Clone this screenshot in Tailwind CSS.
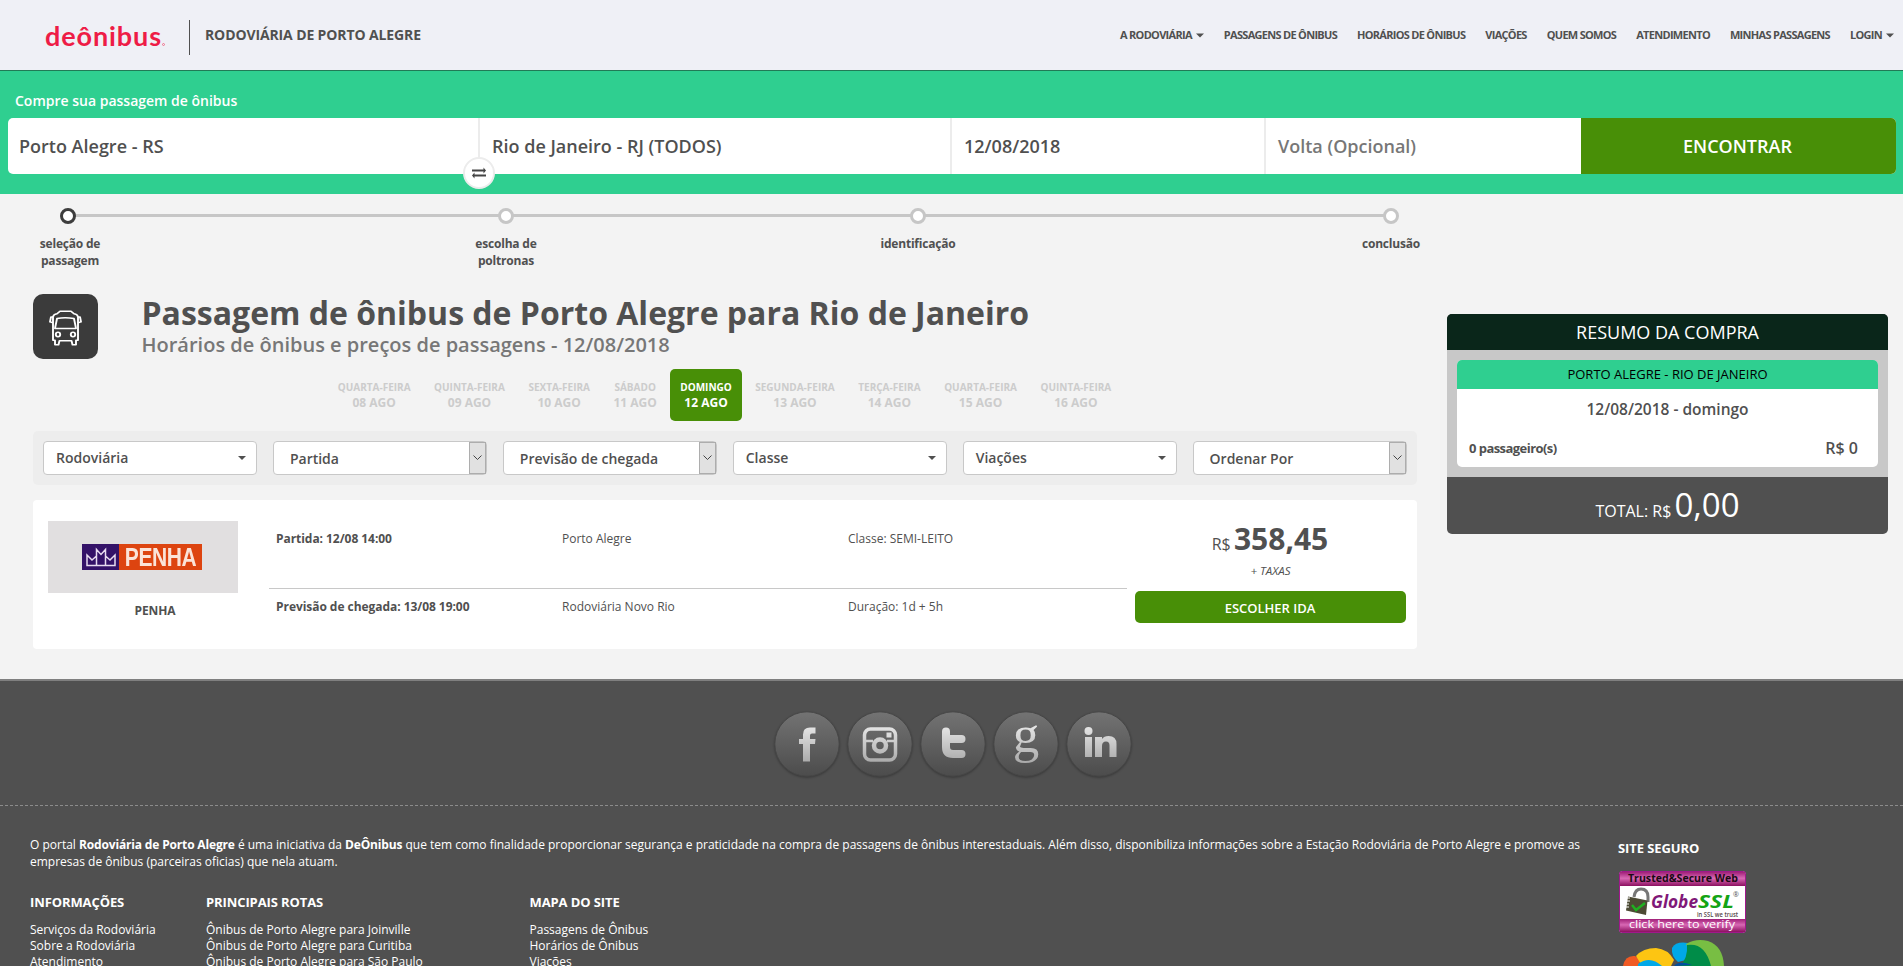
<!DOCTYPE html>
<html lang="pt-BR">
<head>
<meta charset="utf-8">
<title>Rodoviária de Porto Alegre</title>
<script src="https://cdn.jsdelivr.net/npm/@tailwindcss/browser@4"></script>
</head>
<body class="h-[966px] overflow-hidden bg-[#f3f3f3] font-['Open_Sans',sans-serif] text-[#505050]">

<header class="flex h-[71px] items-start border-b border-[#217a56] bg-[#eff0f6] pl-[45px] pr-[9px]">
  <div class="flex h-[70px] w-[144px] items-start pt-[20px] font-['Lato',sans-serif] text-[27px] leading-[32px] font-bold tracking-[0.9px] text-[#ee1c46]">deônibus<span class="mt-[23px] size-[3px] rounded-full border border-[#ee1c46]/50"></span></div>
  <div class="mt-[20px] h-[35px] w-px bg-[#505050]"></div>
  <div class="mt-[25px] ml-[15px] text-[14px] leading-[20px] font-bold tracking-[-0.12px]">RODOVIÁRIA DE PORTO ALEGRE</div>
  <nav class="mt-[25px] ml-auto flex gap-[20px] text-[11px] leading-[20px] font-bold tracking-[-0.7px] whitespace-nowrap">
    <span class="flex items-center gap-[4px]">A RODOVIÁRIA<svg width="8" height="5" viewBox="0 0 8 5"><path d="M0 .5h8L4 4.500z" fill="#505050"/></svg></span>
    <span>PASSAGENS DE ÔNIBUS</span><span>HORÁRIOS DE ÔNIBUS</span><span>VIAÇÕES</span><span>QUEM SOMOS</span><span>ATENDIMENTO</span><span>MINHAS PASSAGENS</span>
    <span class="flex items-center gap-[4px]">LOGIN<svg width="8" height="5" viewBox="0 0 8 5"><path d="M0 .5h8L4 4.500z" fill="#505050"/></svg></span>
  </nav>
</header>

<section class="h-[123px] bg-[#2fcf90] px-[8px] pt-[20px]">
  <div class="h-[27px] pl-[7px] text-[14px] leading-[20px] font-semibold text-white">Compre sua passagem de ônibus</div>
  <div class="relative flex h-[56px] w-[1888px] rounded-[5px] bg-white text-[18px] leading-[56px] font-semibold">
    <div class="w-[472px] border-r-2 border-[#ececec] pl-[11px]">Porto Alegre - RS</div>
    <div class="w-[472px] border-r-2 border-[#ececec] pl-[12px]">Rio de Janeiro - RJ (TODOS)</div>
    <div class="w-[314px] border-r-2 border-[#ececec] pl-[12px]">12/08/2018</div>
    <div class="w-[315px] pl-[12px] text-[#777]">Volta (Opcional)</div>
    <div class="flex-1 rounded-r-[5px] bg-[#488f07] pr-[2px] text-center text-white">ENCONTRAR</div>
    <div class="absolute top-[39px] left-[455px] flex size-[32px] items-center justify-center rounded-full border-2 border-[#ececec] bg-white">
      <svg width="14" height="12" viewBox="0 0 14 12" fill="#444"><path d="M0 2.500h11.500V.5L14 3.500l-2.500 3V4.500H0zM14 9.500H2.500v2L0 8.500l2.500-3v2H14z"/></svg>
    </div>
  </div>
</section>

<ol class="relative flex h-[100px] pt-[14px] pl-[18px] text-center text-[12px] leading-[17px] font-bold tracking-[-0.2px]">
  <li class="absolute top-[20px] left-[68px] h-[3px] w-[1322px] bg-[#c6c6c6]"></li>
  <li class="relative w-[100px]"><div class="mx-auto mb-[11px] size-[16px] rounded-full border-3 border-[#3d3d3d] bg-white"></div><p class="pl-[4px]">seleção de<br>passagem</p></li>
  <li class="relative ml-[338px] w-[100px]"><div class="mx-auto mb-[11px] size-[16px] rounded-full border-3 border-[#c6c6c6] bg-white"></div><p>escolha de<br>poltronas</p></li>
  <li class="relative ml-[312px] w-[100px]"><div class="mx-auto mb-[11px] size-[16px] rounded-full border-3 border-[#c6c6c6] bg-white"></div><p>identificação</p></li>
  <li class="relative ml-[373px] w-[100px]"><div class="mx-auto mb-[11px] size-[16px] rounded-full border-3 border-[#c6c6c6] bg-white"></div><p>conclusão</p></li>
</ol>

<main class="flex h-[385px] items-start pl-[33px]">
  <div class="w-[1384px]">
    <div class="flex h-[75px]">
      <div class="flex size-[65px] items-center justify-center rounded-[10px] bg-[#3b3b3b]">
        <svg class="mt-[2px]" width="33" height="36" viewBox="0 0 33 44" preserveAspectRatio="none" fill="none" stroke="#fff" stroke-width="1.900" stroke-linejoin="round"><path d="M4 8.500Q4.500 5 8 4.500L11 1.500H22L25 4.500Q28.500 5 29 8.500"/><path d="M4 8.500H2L1 14.500L4 15.500M29 8.500H31L32 14.500L29 15.500"/><path d="M4 8V37H6V42.500H9.500L10.500 37.500H22.500L23.500 42.500H27V37H29V8"/><path d="M8 10.500Q16 8.500 25 10.500L27 22.500H6z"/><ellipse cx="9" cy="30" rx="2.200" ry="2.700"/><ellipse cx="24" cy="30" rx="2.200" ry="2.700"/></svg>
      </div>
      <div class="ml-[43.5px]">
        <h1 class="h-[38px] text-[32px] leading-[38px] font-bold">Passagem de ônibus de Porto Alegre para Rio de Janeiro</h1>
        <h2 class="text-[20px] leading-[25px] font-semibold text-[#777]">Horários de ônibus e preços de passagens - 12/08/2018</h2>
      </div>
    </div>
    <div class="-ml-px flex justify-center gap-[3.5px] text-center text-[12px] leading-[16px] font-bold text-[#ccc]">
      <div class="h-[52px] rounded-[5px] px-[10px] pt-[10px]"><div class="text-[10px] leading-[16px]">QUARTA-FEIRA</div>08 AGO</div>
      <div class="h-[52px] rounded-[5px] px-[10px] pt-[10px]"><div class="text-[10px] leading-[16px]">QUINTA-FEIRA</div>09 AGO</div>
      <div class="h-[52px] rounded-[5px] px-[10px] pt-[10px]"><div class="text-[10px] leading-[16px]">SEXTA-FEIRA</div>10 AGO</div>
      <div class="h-[52px] rounded-[5px] px-[10px] pt-[10px]"><div class="text-[10px] leading-[16px]">SÁBADO</div>11 AGO</div>
      <div class="h-[52px] rounded-[5px] bg-[#488f07] px-[10px] pt-[10px] text-white"><div class="text-[10px] leading-[16px]">DOMINGO</div>12 AGO</div>
      <div class="h-[52px] rounded-[5px] px-[10px] pt-[10px]"><div class="text-[10px] leading-[16px]">SEGUNDA-FEIRA</div>13 AGO</div>
      <div class="h-[52px] rounded-[5px] px-[10px] pt-[10px]"><div class="text-[10px] leading-[16px]">TERÇA-FEIRA</div>14 AGO</div>
      <div class="h-[52px] rounded-[5px] px-[10px] pt-[10px]"><div class="text-[10px] leading-[16px]">QUARTA-FEIRA</div>15 AGO</div>
      <div class="h-[52px] rounded-[5px] px-[10px] pt-[10px]"><div class="text-[10px] leading-[16px]">QUINTA-FEIRA</div>16 AGO</div>
    </div>

    <div class="mt-[10px] grid h-[54px] grid-cols-6 gap-[15.5px] rounded-[5px] bg-[#ededed] p-[10px] text-[14px] leading-[32px] font-semibold">
      <div class="flex h-[34px] items-center justify-between rounded-[4px] border border-[#c8c8c8] bg-white pr-[10px] pl-[12px]">Rodoviária<svg width="8" height="4" viewBox="0 0 8 4"><path d="M0 0h8L4 4z" fill="#505050"/></svg></div>
      <div class="flex h-[34px] justify-between rounded-[4px] border border-[#c8c8c8] bg-white pl-[16px]"><span class="pt-px leading-[31px]">Partida</span><span class="flex h-[32px] w-[17px] items-center justify-center border border-[#adadad] bg-[#e1e1e1]"><svg width="9" height="6" viewBox="0 0 9 6" fill="none" stroke="#444"><path d="M.5.5l4 4 4-4"/></svg></span></div>
      <div class="flex h-[34px] justify-between rounded-[4px] border border-[#c8c8c8] bg-white pl-[16px]"><span class="pt-px leading-[31px]">Previsão de chegada</span><span class="flex h-[32px] w-[17px] items-center justify-center border border-[#adadad] bg-[#e1e1e1]"><svg width="9" height="6" viewBox="0 0 9 6" fill="none" stroke="#444"><path d="M.5.5l4 4 4-4"/></svg></span></div>
      <div class="flex h-[34px] items-center justify-between rounded-[4px] border border-[#c8c8c8] bg-white pr-[10px] pl-[12px]">Classe<svg width="8" height="4" viewBox="0 0 8 4"><path d="M0 0h8L4 4z" fill="#505050"/></svg></div>
      <div class="flex h-[34px] items-center justify-between rounded-[4px] border border-[#c8c8c8] bg-white pr-[10px] pl-[12px]">Viações<svg width="8" height="4" viewBox="0 0 8 4"><path d="M0 0h8L4 4z" fill="#505050"/></svg></div>
      <div class="flex h-[34px] justify-between rounded-[4px] border border-[#c8c8c8] bg-white pl-[16px]"><span class="pt-px leading-[31px]">Ordenar Por</span><span class="flex h-[32px] w-[17px] items-center justify-center border border-[#adadad] bg-[#e1e1e1]"><svg width="9" height="6" viewBox="0 0 9 6" fill="none" stroke="#444"><path d="M.5.5l4 4 4-4"/></svg></span></div>
    </div>

    <article class="mt-[15px] flex h-[149px] rounded-[4px] bg-white text-[12px] leading-[18px]">
      <div class="ml-[15px] w-[190px] pt-[21px]">
        <div class="flex h-[72px] items-start bg-[#e1dfe0] pt-[23px] pl-[34px]">
          <div class="flex h-[26px] w-[37px] items-center justify-center bg-[#341268]"><svg width="30" height="20" viewBox="0 0 30 20" fill="none" stroke="#e8dcf0" stroke-width="1.500"><path d="M1 18.500V8l5 5 4.500-4V2.500l4.500 5 4.500-5V9l4.500 4 5-5v10.500zM10.500 9v9.500M19.500 9v9.500"/></svg></div>
          <div class="flex h-[26px] w-[83px] justify-center bg-[#dd4410] font-['Liberation_Sans',sans-serif] text-[25px] leading-[26px] font-bold text-[#fbe3d8]"><span class="scale-x-[0.84] tracking-[-0.5px]">PENHA</span></div>
        </div>
        <p class="mt-[9px] pl-[24px] text-center font-bold tracking-[-0.1px]">PENHA</p>
      </div>
      <div class="ml-[31px] w-[858px]">
        <div class="flex h-[89px] border-b border-[#c8c8c8] pt-[30px] pl-[7px]">
          <p class="w-[286px] font-bold tracking-[-0.05px]">Partida: 12/08 14:00</p><p class="w-[286px]">Porto Alegre</p><p>Classe: SEMI-LEITO</p>
        </div>
        <div class="flex pt-[9px] pl-[7px]">
          <p class="w-[286px] font-bold tracking-[-0.05px]">Previsão de chegada: 13/08 19:00</p><p class="w-[286px]">Rodoviária Novo Rio</p><p>Duração: 1d + 5h</p>
        </div>
      </div>
      <div class="ml-[8px] w-[271px] text-center">
        <p class="mt-[18px] h-[42px] pr-px text-[16px] leading-[42px]">R$ <span class="-ml-px text-[30px] font-bold">358,45</span></p>
        <p class="mt-[2px] text-[11.5px] italic">+ TAXAS</p>
        <div class="mt-[11px] h-[32px] rounded-[5px] bg-[#488f07] pr-px text-[13px] leading-[34px] font-semibold text-white">ESCOLHER IDA</div>
      </div>
    </article>
  </div>

  <aside class="mt-[20px] ml-[30px] h-[220px] w-[441px] overflow-hidden rounded-[5px] bg-[#505050] text-center">
    <h3 class="h-[36px] bg-[#0a261a] text-[18px] leading-[36px] text-white">RESUMO DA COMPRA</h3>
    <div class="h-[127px] bg-[#c8c8c8] p-[10px]">
      <div class="h-[107px] overflow-hidden rounded-[5px] bg-white">
        <p class="h-[29px] bg-[#2fcf90] text-[13px] leading-[29px] text-black">PORTO ALEGRE - RIO DE JANEIRO</p>
        <p class="h-[42px] text-[15.5px] leading-[41px] font-semibold">12/08/2018 - domingo</p>
        <div class="flex justify-between pr-[20px] pl-[12px] leading-[35px]"><span class="text-[13px] font-bold tracking-[-0.55px]">0 passageiro(s)</span><span class="text-[16px] font-semibold">R$ 0</span></div>
      </div>
    </div>
    <p class="h-[57px] text-[16px] leading-[55px] text-white">TOTAL: R$ <span class="-ml-px text-[33px] font-medium">0,00</span></p>
  </aside>
</main>

<footer class="h-[287px] overflow-hidden border-t-2 border-[#7f7f7f] bg-[#505050] text-[12px] text-white">
  <svg width="0" height="0" class="absolute"><defs>
    <linearGradient id="disc" x1="0" y1="0" x2="0" y2="1"><stop offset="0" stop-color="#737373"/><stop offset="1" stop-color="#4c4c4c"/></linearGradient>
    <linearGradient id="ink" gradientUnits="userSpaceOnUse" x1="0" y1="15" x2="0" y2="52"><stop offset="0" stop-color="#e6e6e6"/><stop offset="1" stop-color="#a9a9a9"/></linearGradient>
  </defs></svg>
  <div class="flex h-[125px] justify-center gap-[7px] border-b border-dashed border-[#8c8c8c] pt-[30px] pl-[3px]">
    <svg class="drop-shadow-[0_1px_1px_rgba(0,0,0,0.3)]" width="66" height="66" viewBox="0 0 66 66"><circle cx="33" cy="33" r="32.200" fill="url(#disc)" stroke="#474747"/><path d="M41.500 16.500h-5.500q-7 0-7 7V28h-4v5h4v17.500h7V33h5l.5-5h-5.500v-3.500q0-2 2-2h3.500z" fill="url(#ink)"/></svg>
    <svg class="drop-shadow-[0_1px_1px_rgba(0,0,0,0.3)]" width="66" height="66" viewBox="0 0 66 66"><circle cx="33" cy="33" r="32.200" fill="url(#disc)" stroke="#474747"/><g fill="none" stroke="url(#ink)"><rect x="17.500" y="18" width="31" height="31" rx="6" stroke-width="3.500"/><circle cx="33" cy="34.500" r="6" stroke-width="4.500"/><path d="M18 30h8M40 30h8" stroke-width="2.500"/></g><rect x="39.500" y="21.500" width="5" height="5" fill="#ddd"/></svg>
    <svg class="drop-shadow-[0_1px_1px_rgba(0,0,0,0.3)]" width="66" height="66" viewBox="0 0 66 66"><circle cx="33" cy="33" r="32.200" fill="url(#disc)" stroke="#474747"/><path d="M26 20.500V36q0 7 7 7h8.500M26 28h15.500" fill="none" stroke="url(#ink)" stroke-width="8" stroke-linecap="round"/></svg>
    <svg class="drop-shadow-[0_1px_1px_rgba(0,0,0,0.3)]" width="66" height="66" viewBox="0 0 66 66"><circle cx="33" cy="33" r="32.200" fill="url(#disc)" stroke="#474747"/><text x="33" y="41" text-anchor="middle" font-family="Liberation Serif,serif" font-size="53" fill="url(#ink)">g</text></svg>
    <svg class="drop-shadow-[0_1px_1px_rgba(0,0,0,0.3)]" width="66" height="66" viewBox="0 0 66 66"><circle cx="33" cy="33" r="32.200" fill="url(#disc)" stroke="#474747"/><g fill="url(#ink)"><circle cx="22.500" cy="20" r="4"/><rect x="19" y="26" width="7" height="20"/><path d="M29 26h7v2q2-3 6.500-3 8 0 8 8v13h-7V34.500q0-4-3.500-4-4 0-4 4.500v11h-7z"/></g></svg>
  </div>
  <div class="flex pl-[30px]">
    <div class="w-[1587px] pt-[30px]">
      <p class="w-[1570px] leading-[17px]">O portal <b class="tracking-[-0.16px]">Rodoviária de Porto Alegre</b> é uma iniciativa da <b class="tracking-[-0.16px]">DeÔnibus</b> que tem como finalidade proporcionar segurança e praticidade na compra de passagens de ônibus interestaduais. Além disso, disponibiliza informações sobre a Estação Rodoviária de Porto Alegre e promove as empresas de ônibus (parceiras oficias) que nela atuam.</p>
      <div class="mt-[24px] flex leading-[16px]">
        <div class="w-[176px]"><h4 class="mb-[12px] text-[13px] font-bold tracking-[-0.1px]">INFORMAÇÕES</h4><p>Serviços da Rodoviária</p><p>Sobre a Rodoviária</p><p>Atendimento</p></div>
        <div class="w-[323.5px]"><h4 class="mb-[12px] text-[13px] font-bold tracking-[-0.1px]">PRINCIPAIS ROTAS</h4><p>Ônibus de Porto Alegre para Joinville</p><p>Ônibus de Porto Alegre para Curitiba</p><p>Ônibus de Porto Alegre para São Paulo</p></div>
        <div><h4 class="mb-[12px] text-[13px] font-bold tracking-[-0.1px]">MAPA DO SITE</h4><p>Passagens de Ônibus</p><p>Horários de Ônibus</p><p>Viações</p></div>
      </div>
    </div>
    <div class="pt-[34px]">
      <h4 class="pl-px text-[13px] leading-[16px] font-bold tracking-[-0.1px]">SITE SEGURO</h4>
      <svg width="128" height="96" viewBox="0 0 128 96" class="mt-[14px] ml-px block">
        <defs><linearGradient id="rose" x1="0" y1="0" x2="0" y2="1"><stop offset="0" stop-color="#a02078"/><stop offset=".45" stop-color="#d868b4"/><stop offset="1" stop-color="#8c1060"/></linearGradient></defs>
        <rect x="1.500" y="1.500" width="126" height="61" rx="2" fill="#fff" stroke="#a0188c"/>
        <rect x="2" y="2" width="125" height="14" fill="url(#rose)"/><rect x="2" y="49" width="125" height="13" fill="url(#rose)"/>
        <text x="10" y="12" font-family="Open Sans" font-size="10" font-weight="bold" fill="#1a0a14" textLength="110" lengthAdjust="spacingAndGlyphs">Trusted&amp;Secure Web</text>
        <path d="M16 27q1-8 7-8 7 0 7 8v5" fill="none" stroke="#777" stroke-width="3"/><path d="M10 26.500l19.500 4-1.500 14.500-20-4.500z" fill="#4c4a34"/><path d="M14 35l4 5 9-7" fill="none" stroke="#20b020" stroke-width="2.500"/><path d="M7 28h5M7 31h5M6 34h5M6 37h5" stroke="#fff"/>
        <text x="33" y="38" font-family="Open Sans" font-size="17" font-style="italic" font-weight="bold" fill="#801878" textLength="47" lengthAdjust="spacingAndGlyphs">Globe</text>
        <text x="80" y="38" font-family="Open Sans" font-size="18" font-style="italic" font-weight="bold" fill="#14a414" textLength="36" lengthAdjust="spacingAndGlyphs">SSL</text>
        <text x="115" y="27" font-family="Open Sans" font-size="7" fill="#555">®</text>
        <text x="79" y="46.500" font-family="Open Sans" font-size="6.500" font-weight="600" fill="#554848" textLength="41" lengthAdjust="spacingAndGlyphs">in SSL we trust</text>
        <text x="11" y="58" font-family="Open Sans" font-size="10" font-weight="500" fill="#fff" textLength="106" lengthAdjust="spacingAndGlyphs">click here to verify</text>
        <path d="M5 96q2-11 12-10l6 4-3 6z" fill="#f05a24"/><path d="M18 86q7-8 20-8 12 1 18 12l-3 6H24z" fill="#fdc512"/><path d="M20 94q12-9 24 2H20z" fill="#00a8e8"/>
        <path d="M54 78q4-7 16-5l6 4-4 12-12 3q-7-6-6-14z" fill="#00a8e8"/><path d="M68 74q10-6 22-3 15 5 16 25H78z" fill="#78be43"/><path d="M69 75q18-3 24 21H62q8-8 7-21z" fill="#008c48"/><path d="M56 96q5-6 18-1z" fill="#0050a0"/>
      </svg>
    </div>
  </div>
</footer>
</body>
</html>
